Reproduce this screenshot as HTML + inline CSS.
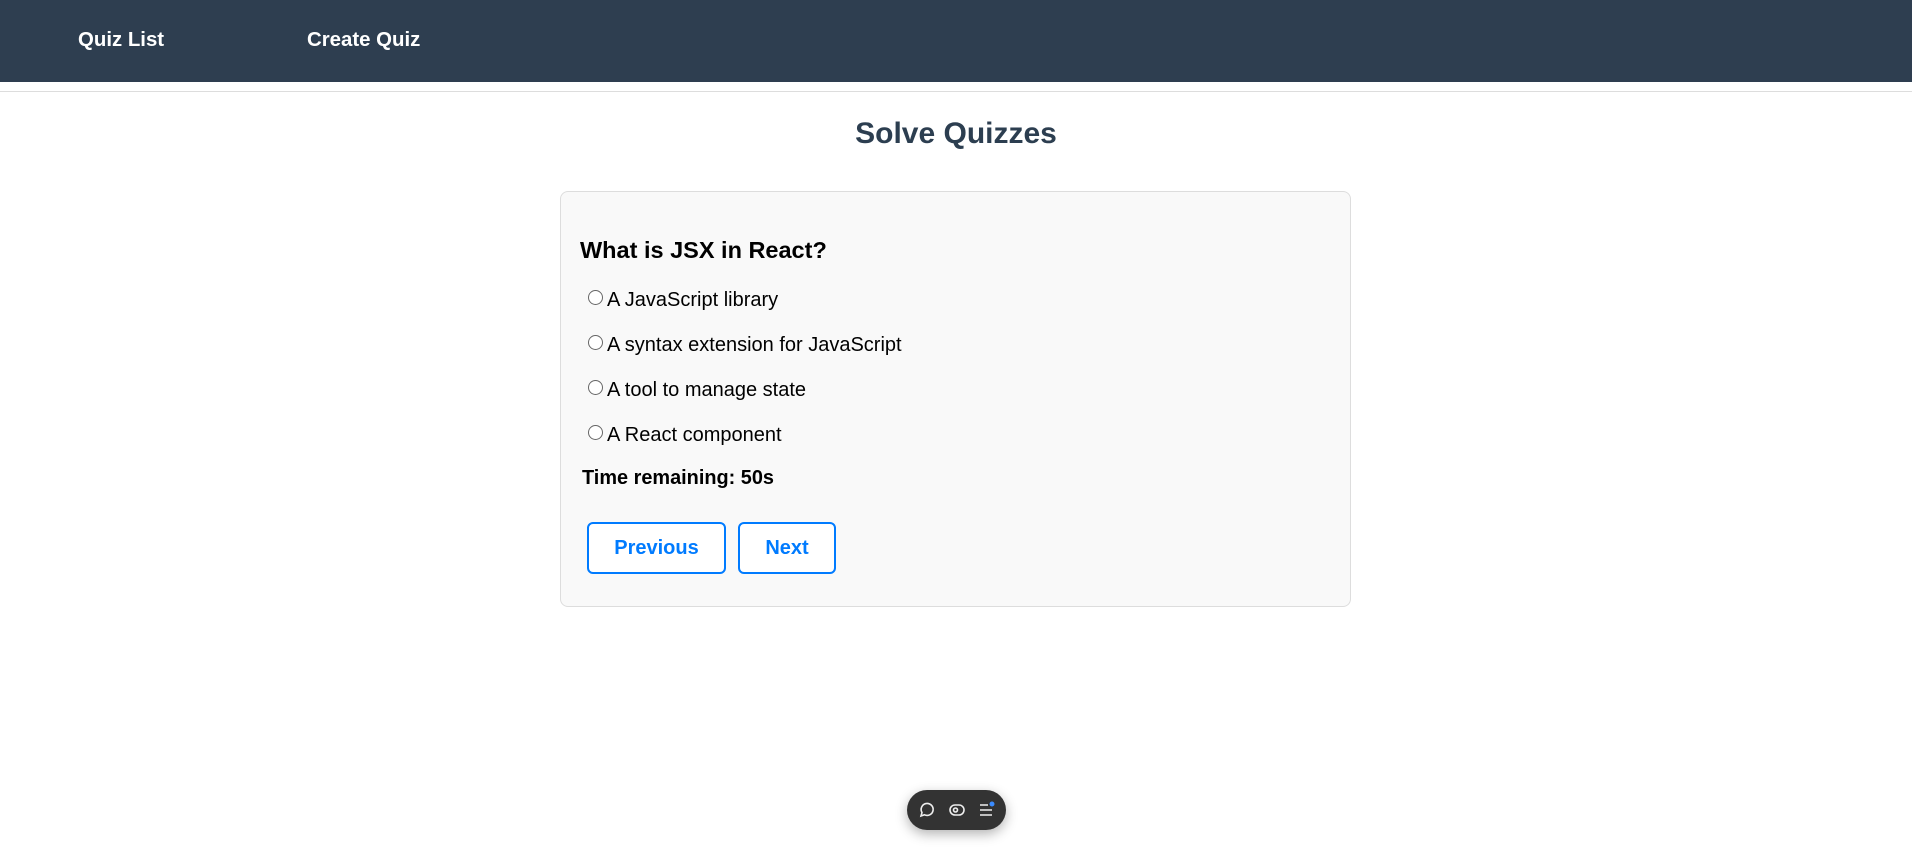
<!DOCTYPE html>
<html><head><style>
*{margin:0;padding:0;box-sizing:border-box}
body{width:1912px;height:866px;background:#fff;font-family:"Liberation Sans",Arial,sans-serif;position:relative;overflow:hidden}
.nav{position:absolute;left:0;top:0;width:1912px;height:82px;background:#2e3e50}
.nav a{position:absolute;top:29px;color:#fff;font-weight:bold;font-size:20.4px;line-height:22px;text-decoration:none}
.line{position:absolute;left:0;top:91px;width:1912px;height:1px;background:#ddd}
h1{position:absolute;left:0;width:1912px;top:116px;text-align:center;font-size:30px;line-height:36px;color:#2c3e50}
.card{position:absolute;left:560px;top:191px;width:791px;height:416px;background:#f9f9f9;border:1px solid #ddd;border-radius:8px}
.q{position:absolute;left:580px;top:236px;font-size:23.5px;line-height:28px;font-weight:bold;color:#000}
.opt{position:absolute;left:588px;font-size:20px;line-height:24px;color:#000}
.opt i{display:inline-block;width:15px;height:15px;border:1px solid #666;border-radius:50%;background:#fff;margin-right:4px;vertical-align:1px}
.t{position:absolute;left:582px;top:466px;font-size:19.9px;line-height:24px;font-weight:bold}
.btn{position:absolute;top:522px;height:52px;border:2px solid #007bff;border-radius:6px;background:#fff;color:#007bff;font-weight:bold;font-size:20px;line-height:48px;text-align:center}
.tb{position:absolute;left:907px;top:790px;width:99px;height:40px;border-radius:20px;background:#333;box-shadow:0 4px 12px rgba(0,0,0,.3)}
</style></head><body>
<div class="nav"><a style="left:78px">Quiz List</a><a style="left:307px">Create Quiz</a></div>
<div class="line"></div>
<h1>Solve Quizzes</h1>
<div class="card"></div>
<div class="q">What is JSX in React?</div>
<div class="opt" style="top:288px"><i></i>A JavaScript library</div>
<div class="opt" style="top:333px"><i></i>A syntax extension for JavaScript</div>
<div class="opt" style="top:378px"><i></i>A tool to manage state</div>
<div class="opt" style="top:423px"><i></i>A React component</div>
<div class="t">Time remaining: 50s</div>
<div class="btn" style="left:587px;width:139px">Previous</div>
<div class="btn" style="left:738px;width:98px">Next</div>
<div class="tb"><svg width="99" height="40" viewBox="0 0 99 40">
<g fill="none" stroke="#eee" stroke-width="1.6">
<path d="M14 26l1-3.5a6 6 0 1 1 2.5 2.3z"/>
<rect x="43" y="15" width="14" height="10" rx="5"/><circle cx="48.5" cy="20" r="2"/>
<path d="M73 15h8M73 20h12M73 25h12"/></g>
<circle cx="85" cy="14" r="2.5" fill="#3b8cff"/></svg></div>
</body></html>
